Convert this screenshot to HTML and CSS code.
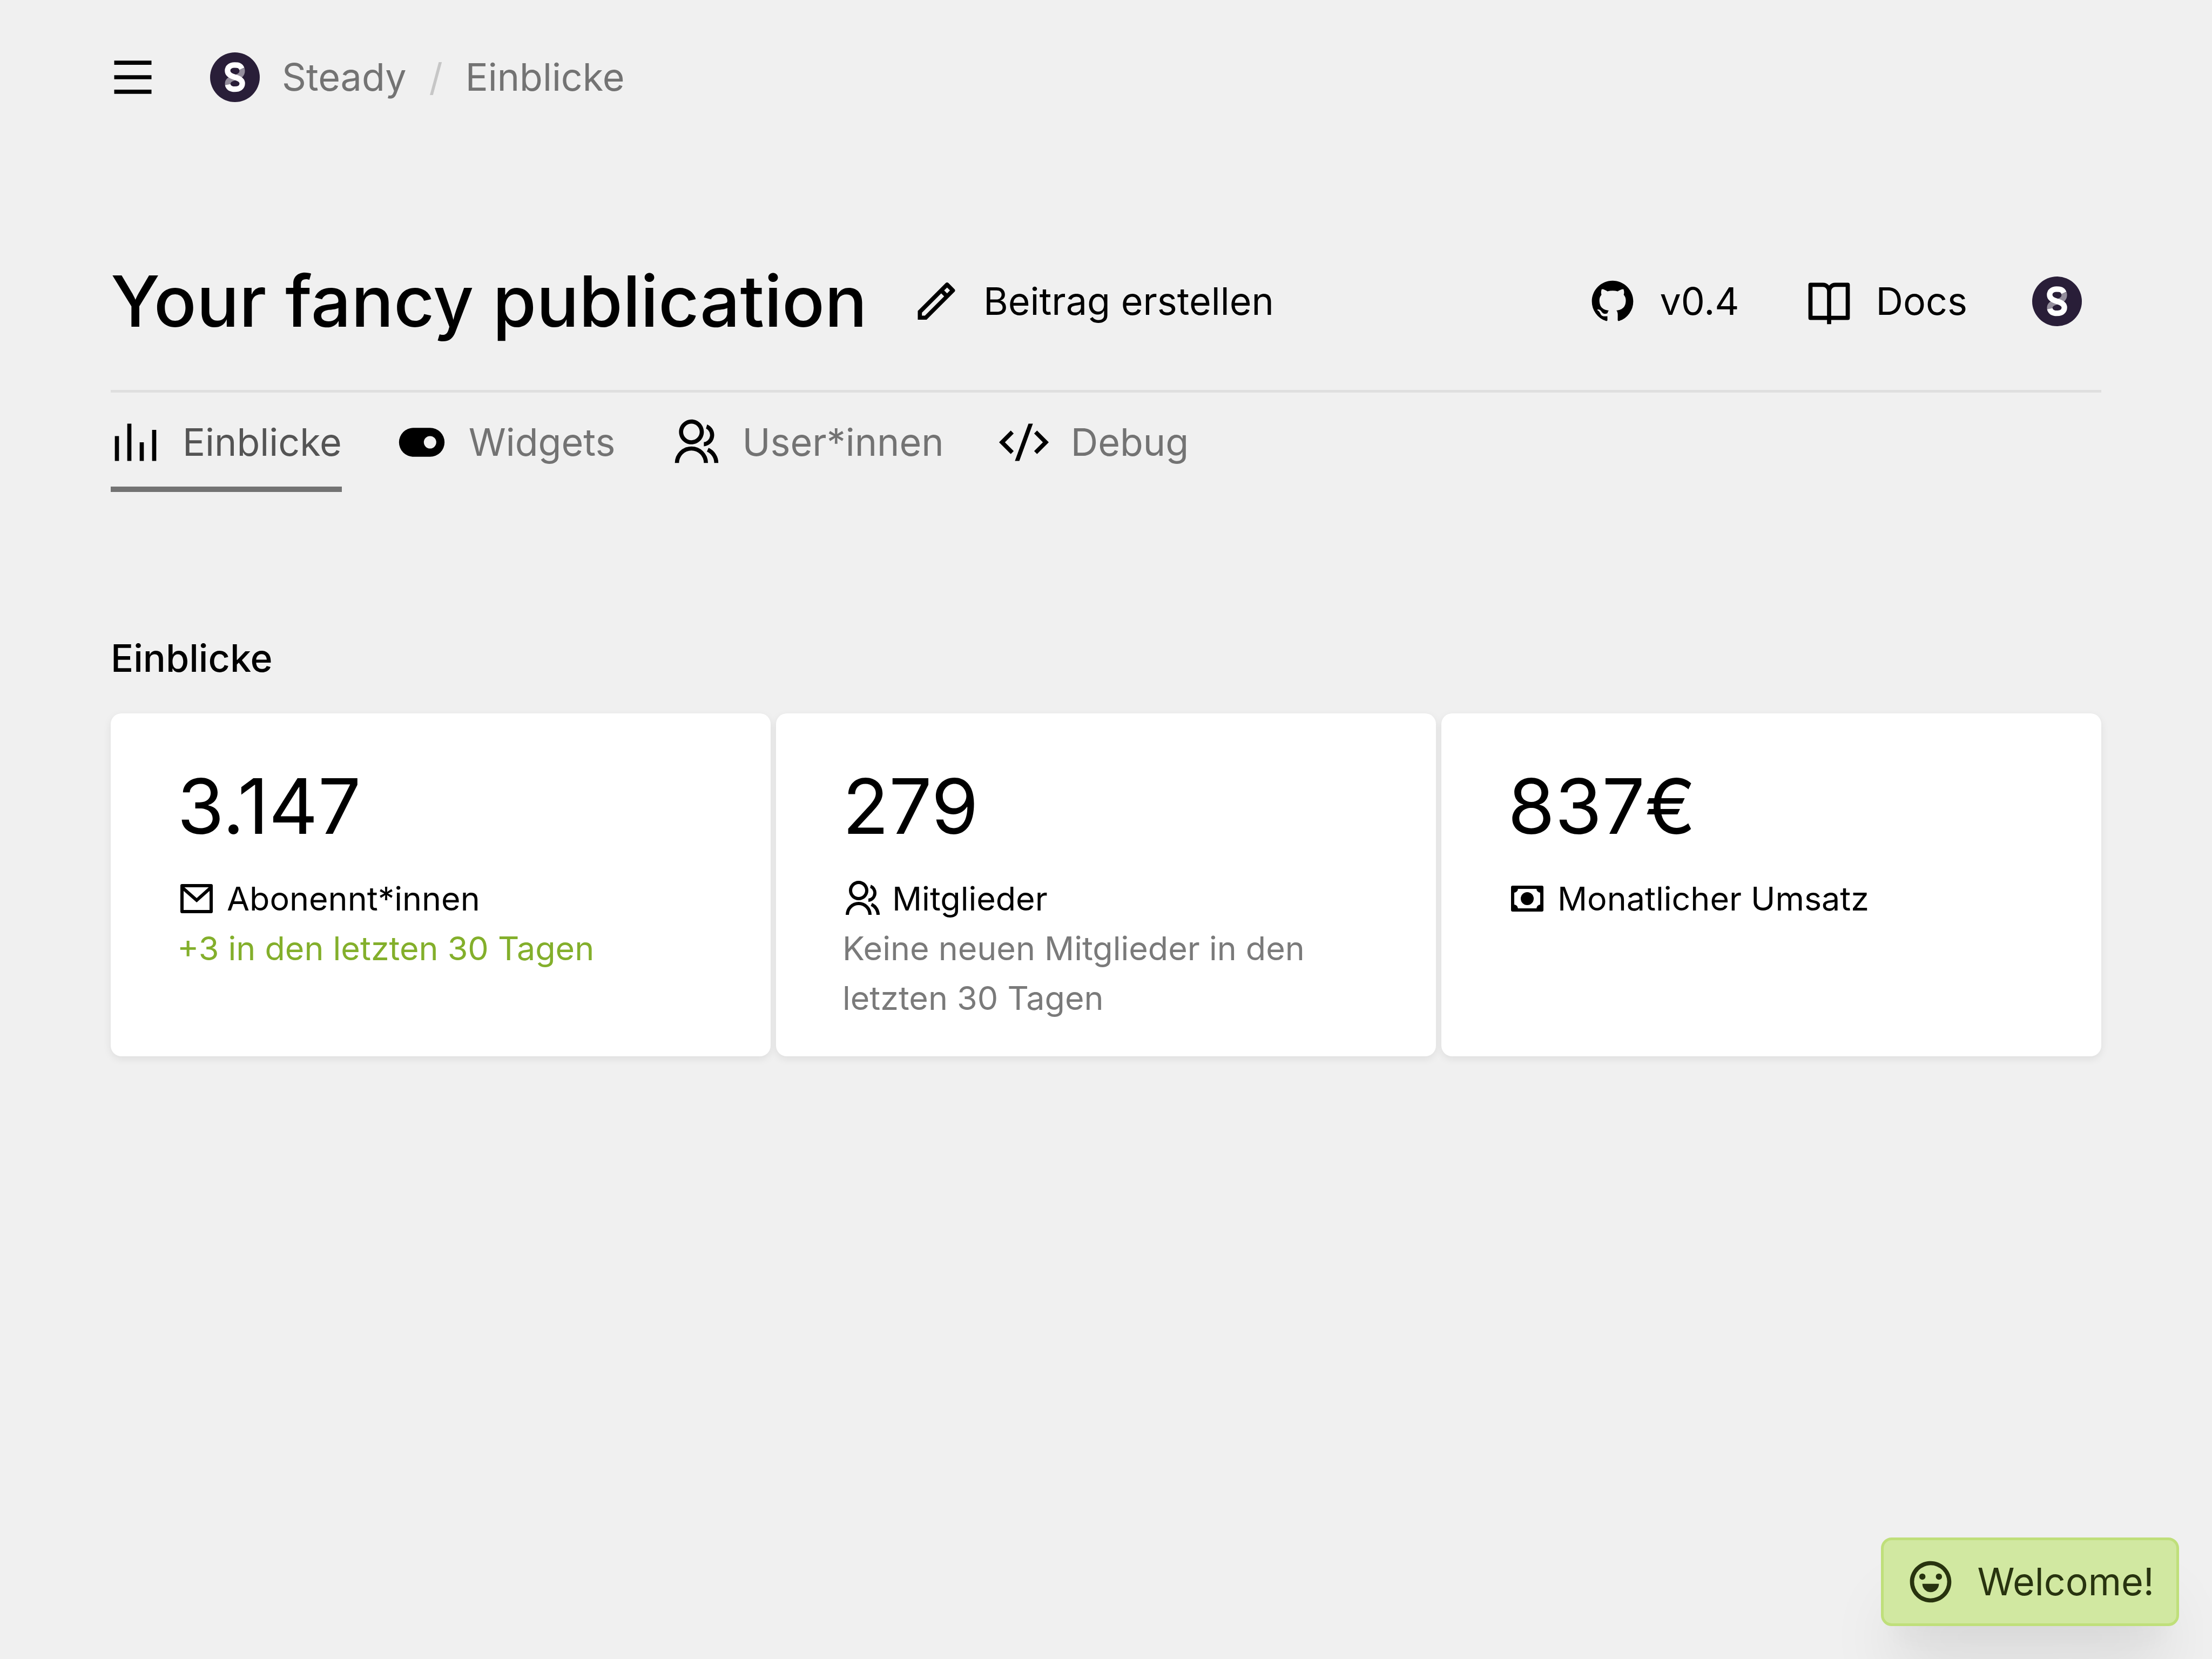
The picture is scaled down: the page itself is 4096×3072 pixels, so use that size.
FILE: index.html
```html
<!DOCTYPE html>
<html lang="de">
<head>
<meta charset="utf-8">
<meta name="viewport" content="width=device-width, initial-scale=1">
<title>Einblicke – Steady</title>
<link rel="stylesheet" href="styles.css">
</head>
<body>
<svg class="sprite" aria-hidden="true">
  <symbol id="logo" viewBox="0 0 108 108">
    <circle cx="54" cy="54" r="54" fill="#291e38"/>
    <path d="M69 35.500C72 46 66 52 54 55C42 58 36 63 39 73" fill="none" stroke="#948e9c" stroke-width="12"/>
    <path d="M69 35.500C66 28 61 27.500 53.500 27.500C44 27.500 38 32 38 40C38 47 43 51 54 54C65 57 70 61 70 67.500C70 76 63 80 54 80C46 80 40 77.500 38.500 70" fill="none" stroke="#fff" stroke-width="12"/>
  </symbol>
  <symbol id="group" viewBox="0 0 24 24">
    <path d="M2 22a8 8 0 1 1 16 0h-2a6 6 0 1 0-12 0H2zm8-9c-3.315 0-6-2.685-6-6s2.685-6 6-6 6 2.685 6 6-2.685 6-6 6zm0-2c2.210 0 4-1.790 4-4s-1.790-4-4-4-4 1.790-4 4 1.790 4 4 4zm8.284 3.703A8.002 8.002 0 0 1 23 22h-2a6.001 6.001 0 0 0-3.537-5.473l.820-1.824zm-.688-11.290A5.500 5.500 0 0 1 21 8.500a5.499 5.499 0 0 1-5 5.478v-2.013a3.500 3.500 0 0 0 1.041-6.609l.555-1.943z"/>
  </symbol>
</svg>

<nav class="topbar" aria-label="Breadcrumb">
  <button class="menu" type="button" aria-label="Menü">
    <svg class="icon" viewBox="0 0 24 24"><path d="M3 4h18v2H3V4zm0 7h18v2H3v-2zm0 7h18v2H3v-2z"/></svg>
  </button>
  <a class="item crumb" href="#"><svg class="icon"><use href="#logo"/></svg>Steady</a>
  <span class="slash">/</span>
  <a class="crumb" href="#">Einblicke</a>
</nav>

<header class="head">
  <h1 class="title">Your fancy publication</h1>
  <a class="item" href="#">
    <svg class="icon" viewBox="0 0 24 24"><path d="M15.728 9.576l-1.414-1.414L5 17.476v1.414h1.414l9.314-9.314zm1.414-1.414l1.414-1.414-1.414-1.414-1.414 1.414 1.414 1.414zM7.242 20.890H3v-4.243L16.435 3.212a1 1 0 0 1 1.414 0l2.829 2.829a1 1 0 0 1 0 1.414L7.243 20.890z"/></svg>
    Beitrag erstellen
  </a>
  <div class="actions">
    <a class="item" href="#">
      <svg class="icon" viewBox="0 0 24 24"><path d="M12 2C6.475 2 2 6.475 2 12a9.994 9.994 0 0 0 6.838 9.488c.500.087.687-.213.687-.476 0-.237-.013-1.024-.013-1.862-2.512.463-3.162-.612-3.362-1.175-.113-.288-.600-1.175-1.025-1.413-.350-.187-.850-.650-.013-.662.788-.013 1.350.725 1.538 1.025.900 1.512 2.338 1.087 2.912.825.088-.650.350-1.087.638-1.337-2.225-.250-4.550-1.113-4.550-4.938 0-1.088.387-1.987 1.025-2.688-.100-.250-.450-1.275.100-2.650 0 0 .837-.262 2.750 1.026a9.280 9.280 0 0 1 2.500-.338c.850 0 1.700.112 2.500.337 1.912-1.300 2.750-1.024 2.750-1.024.550 1.375.200 2.400.100 2.650.637.700 1.025 1.587 1.025 2.687 0 3.838-2.337 4.688-4.562 4.938.362.312.675.912.675 1.850 0 1.337-.013 2.412-.013 2.750 0 .262.188.574.688.474A10.016 10.016 0 0 0 22 12c0-5.525-4.475-10-10-10z"/></svg>
      v0.4
    </a>
    <a class="item" href="#">
      <svg class="icon" viewBox="0 0 24 24"><path d="M13 21v2h-2v-2H3a1 1 0 0 1-1-1V4a1 1 0 0 1 1-1h6a3.990 3.990 0 0 1 3 1.354A3.990 3.990 0 0 1 15 3h6a1 1 0 0 1 1 1v16a1 1 0 0 1-1 1h-8zm7-2V5h-5a2 2 0 0 0-2 2v12h7zm-9 0V7a2 2 0 0 0-2-2H4v14h7z"/></svg>
      Docs
    </a>
    <a class="item" href="#" aria-label="Profil"><svg class="icon"><use href="#logo"/></svg></a>
  </div>
</header>

<nav class="tabs" aria-label="Bereiche">
  <a class="item tab tab-active" href="#" aria-current="page">
    <svg class="icon" viewBox="0 0 24 24"><path d="M2 9h2v12H2V9zm6-6h2v18H8V3zm6 9h2v9h-2v-9zm6-6h2v15h-2V6z"/></svg>
    Einblicke
  </a>
  <a class="item tab" href="#">
    <svg class="icon" viewBox="0 0 24 24"><path d="M8 5h8a7 7 0 0 1 0 14H8A7 7 0 0 1 8 5zm8 10a3 3 0 1 0 0-6 3 3 0 0 0 0 6z"/></svg>
    Widgets
  </a>
  <a class="item tab" href="#"><svg class="icon"><use href="#group"/></svg>User*innen</a>
  <a class="item tab" href="#">
    <svg class="icon" viewBox="0 0 24 24"><path d="M24 12l-5.657 5.657-1.414-1.414L21.172 12l-4.243-4.243 1.414-1.414L24 12zM2.828 12l4.243 4.243-1.414 1.414L0 12l5.657-5.657L7.070 7.757 2.828 12zm6.960 9H7.660l6.552-18h2.128L9.788 21z"/></svg>
    Debug
  </a>
</nav>

<main class="content">
  <h2 class="section-title">Einblicke</h2>
  <div class="cards">
    <section class="card">
      <p class="number">3.147</p>
      <p class="label">
        <svg class="icon icon-small" viewBox="0 0 24 24"><path d="M3 3h18a1 1 0 0 1 1 1v16a1 1 0 0 1-1 1H3a1 1 0 0 1-1-1V4a1 1 0 0 1 1-1zm17 4.238l-7.928 7.100L4 7.216V19h16V7.238zM4.511 5l7.550 6.662L19.502 5H4.511z"/></svg>
        Abonennt*innen
      </p>
      <p class="note note-up">+3 in den letzten 30 Tagen</p>
    </section>
    <section class="card">
      <p class="number">279</p>
      <p class="label"><svg class="icon icon-small"><use href="#group"/></svg>Mitglieder</p>
      <p class="note">Keine neuen Mitglieder in den letzten 30 Tagen</p>
    </section>
    <section class="card">
      <p class="number">837€</p>
      <p class="label">
        <svg class="icon icon-small" viewBox="0 0 24 24"><path fill-rule="evenodd" d="M3 4h18a1 1 0 0 1 1 1v14a1 1 0 0 1-1 1H3a1 1 0 0 1-1-1V5a1 1 0 0 1 1-1zm3.300 2A2.500 2.500 0 0 1 4 8.300v7.400A2.500 2.500 0 0 1 6.300 18h11.400a2.500 2.500 0 0 1 2.300-2.300V8.300A2.500 2.500 0 0 1 17.700 6H6.300zM12 16a4 4 0 1 1 0-8 4 4 0 0 1 0 8z"/></svg>
        Monatlicher Umsatz
      </p>
    </section>
  </div>
</main>

<div class="item toast" role="status">
  <svg class="icon" viewBox="0 0 24 24"><path d="M12 22C6.477 22 2 17.523 2 12S6.477 2 12 2s10 4.477 10 10-4.477 10-10 10zm0-2a8 8 0 1 0 0-16 8 8 0 0 0 0 16zm-4-7h8a4 4 0 1 1-8 0zm0-2a1.500 1.500 0 1 1 0-3 1.500 1.500 0 0 1 0 3zm8 0a1.500 1.500 0 1 1 0-3 1.500 1.500 0 0 1 0 3z"/></svg>
  Welcome!
</div>
</body>
</html>
```

FILE: styles.css
```css
* {
  box-sizing: border-box;
  margin: 0;
  padding: 0;
}

body {
  min-height: 100vh;
  padding: 0 205px;
  background: #f0f0f0;
  color: #000;
  font-family: Inter, "Liberation Sans", sans-serif;
  font-size: 70px;
  line-height: 108px;
}

a {
  color: inherit;
  text-decoration: none;
}

.sprite {
  display: none;
}

.icon {
  flex: none;
  width: 92px;
  height: 92px;
  fill: currentColor;
}

.icon-small {
  width: 72px;
  height: 72px;
}

.item {
  display: flex;
  align-items: center;
  gap: 41px;
  white-space: nowrap;
}

.topbar {
  display: flex;
  align-items: center;
  height: 286px;
  margin-left: -5px;
}

.menu {
  display: flex;
  margin-right: 97px;
  border: 0;
  background: none;
  color: #000;
}

.crumb {
  color: #737373;
}

.slash {
  margin: 0 42px;
  color: #c6c6c6;
}

.head {
  display: flex;
  align-items: center;
  gap: 82px;
  height: 441px;
  padding-top: 108px;
  border-bottom: 5px solid #dfdfdf;
}

.title {
  font-size: 131px;
  font-weight: 500;
  line-height: 208px;
}

.actions {
  display: flex;
  gap: 120px;
  margin-left: auto;
  padding-right: 36px;
}

.tabs {
  display: flex;
  gap: 102px;
}

.tab {
  height: 184px;
  padding-top: 10px;
  border-bottom: 10px solid transparent;
  color: #737373;
}

.tab .icon {
  color: #000;
}

.tab-active {
  border-color: #737373;
  color: #545454;
}

.content {
  padding-top: 254px;
}

.section-title {
  margin-bottom: 48px;
  font-size: 70px;
  font-weight: 500;
}

.cards {
  display: grid;
  grid-template-columns: repeat(3, 1fr);
  gap: 10px;
}

.card {
  padding: 61px 123px 62px;
  border-radius: 20px;
  background: #fff;
  box-shadow: 0 5px 15px rgba(0, 0, 0, 0.08);
  font-size: 61px;
  line-height: 92px;
}

.number {
  margin-bottom: 14px;
  font-size: 141px;
  line-height: 222px;
}

.label {
  display: flex;
  align-items: center;
  gap: 20px;
}

.note {
  color: #7a7a7a;
}

.note-up {
  color: #83af2b;
}

.toast {
  position: fixed;
  right: 61px;
  bottom: 61px;
  height: 164px;
  padding: 0 41px;
  border: 5px solid #bfdf7a;
  border-radius: 20px;
  background: #d1e8a1;
  box-shadow: 0 102px 128px -26px rgba(0, 0, 0, 0.1), 0 51px 51px -26px rgba(0, 0, 0, 0.04);
  color: #28330f;
}
```
